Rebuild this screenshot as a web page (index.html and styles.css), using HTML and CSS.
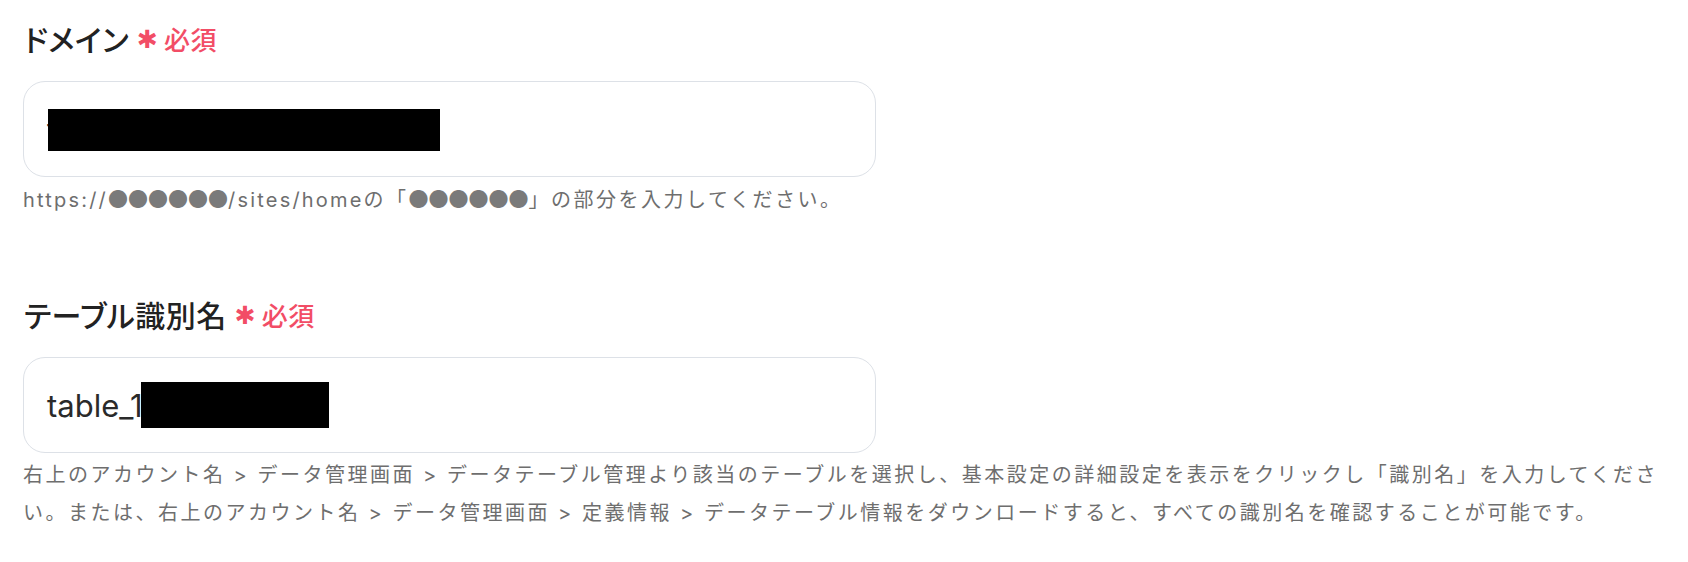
FILE: index.html
```html
<!DOCTYPE html>
<html lang="ja">
<head>
<meta charset="utf-8">
<title>設定</title>
<link rel="stylesheet" href="styles.css">
</head>
<body>
<main class="form">
  <section class="field">
    <div class="label">
      <span class="label-text">ドメイン</span>
      <span class="req-mark">✱</span>
      <span class="req-text">必須</span>
    </div>
    <div class="input">
      <span class="value">t</span><span class="redact redact-domain"></span>
    </div>
    <p class="help"><span class="latin">https://</span><span class="dots">●●●●●●</span><span class="latin">/sites/home</span>の「<span class="dots">●●●●●●</span>」の部分を入力してください。</p>
  </section>
  <section class="field">
    <div class="label">
      <span class="label-text">テーブル識別名</span>
      <span class="req-mark">✱</span>
      <span class="req-text">必須</span>
    </div>
    <div class="input">
      <span class="value">table_1</span><span class="redact redact-table"></span>
    </div>
    <p class="help">右上のアカウント名 &gt; データ管理画面 &gt; データテーブル管理より該当のテーブルを選択し、基本設定の詳細設定を表示をクリックし「識別名」を入力してください。または、右上のアカウント名 &gt; データ管理画面 &gt; 定義情報 &gt; データテーブル情報をダウンロードすると、すべての識別名を確認することが可能です。</p>
  </section>
</main>
</body>
</html>
```
FILE: styles.css
```css
html, body {
  margin: 0;
  padding: 0;
  background: #ffffff;
}
body {
  font-family: Inter, "Noto Sans CJK JP", sans-serif;
  color: #222222;
}
.form {
  display: flex;
  flex-direction: column;
  gap: 75px;
  padding: 18px 23px 0 23px;
}
.field {
  display: flex;
  flex-direction: column;
}
.label {
  display: flex;
  align-items: center;
  height: 40px;
  margin-bottom: 23px;
  padding-left: 1px;
}
.label-text {
  font-family: "Noto Sans CJK JP", sans-serif;
  font-size: 30px;
  font-weight: 500;
  font-feature-settings: "palt";
  letter-spacing: 0.5px;
  color: #222222;
}
.req-mark {
  font-family: "DejaVu Sans", sans-serif;
  font-size: 25px;
  color: #f24d66;
  margin-left: 8px;
  margin-right: 6px;
  position: relative;
  top: 1px;
}
.req-text {
  font-family: "Noto Sans CJK JP", sans-serif;
  font-size: 26px;
  font-weight: 500;
  letter-spacing: 0.5px;
  color: #f24d66;
}
.input {
  box-sizing: border-box;
  width: 853px;
  height: 96px;
  border: 1.5px solid #dde1e7;
  border-radius: 22px;
  display: flex;
  align-items: center;
  padding-left: 23px;
  background: #fff;
}
.value {
  font-size: 31px;
  color: #2a2a2a;
  white-space: pre;
}
.redact {
  display: inline-block;
  background: #000;
}
.redact-domain {
  width: 392px;
  height: 42px;
  margin-left: -9px;
  margin-top: 1px;
}
.redact-table {
  width: 188px;
  height: 46px;
  margin-left: -2px;
}
.help {
  margin: 3px 0 0 0;
  font-size: 20px;
  line-height: 38px;
  letter-spacing: 2.5px;
  color: #6e6e6e;
}
.latin {
  letter-spacing: 2.2px;
}
.dots {
  font-family: "Noto Sans CJK JP", sans-serif;
  letter-spacing: 0;
  color: #7a7a7a;
}
```
